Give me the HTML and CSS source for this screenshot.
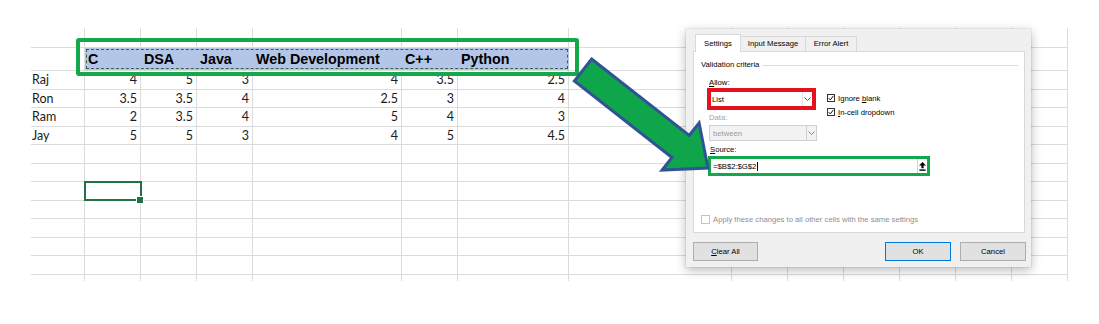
FILE: index.html
```html
<!DOCTYPE html>
<html lang="en">
<head>
<meta charset="utf-8">
<title>Data Validation</title>
<link rel="stylesheet" href="styles.css">
</head>
<body>
<div class="page">
  <div class="sheet">
    <div class="row top"><i></i><i></i><i></i><i></i><i></i><i></i><i></i><i></i><i></i><i></i><i></i><i></i><i></i><i></i></div>
    <div class="row head"><i></i><div class="hdr"><span>C</span><span>DSA</span><span>Java</span><span>Web Development</span><span>C++</span><span>Python</span></div><i></i><i></i><i></i><i></i><i></i><i></i><i></i></div>
    <div class="row data"><span class="nm">Raj</span><span class="v">4</span><span class="v">5</span><span class="v">3</span><span class="v">4</span><span class="v">3.5</span><span class="v">2.5</span><i></i><i></i><i></i><i></i><i></i><i></i><i></i></div>
    <div class="row data"><span class="nm">Ron</span><span class="v">3.5</span><span class="v">3.5</span><span class="v">4</span><span class="v">2.5</span><span class="v">3</span><span class="v">4</span><i></i><i></i><i></i><i></i><i></i><i></i><i></i></div>
    <div class="row data"><span class="nm">Ram</span><span class="v">2</span><span class="v">3.5</span><span class="v">4</span><span class="v">5</span><span class="v">4</span><span class="v">3</span><i></i><i></i><i></i><i></i><i></i><i></i><i></i></div>
    <div class="row data"><span class="nm">Jay</span><span class="v">5</span><span class="v">5</span><span class="v">3</span><span class="v">4</span><span class="v">5</span><span class="v">4.5</span><i></i><i></i><i></i><i></i><i></i><i></i><i></i></div>
    <div class="row"><i></i><i></i><i></i><i></i><i></i><i></i><i></i><i></i><i></i><i></i><i></i><i></i><i></i><i></i></div>
    <div class="row"><i></i><i></i><i></i><i></i><i></i><i></i><i></i><i></i><i></i><i></i><i></i><i></i><i></i><i></i></div>
    <div class="row"><i></i><i class="sel"></i><i></i><i></i><i></i><i></i><i></i><i></i><i></i><i></i><i></i><i></i><i></i><i></i></div>
    <div class="row"><i></i><i></i><i></i><i></i><i></i><i></i><i></i><i></i><i></i><i></i><i></i><i></i><i></i><i></i></div>
    <div class="row"><i></i><i></i><i></i><i></i><i></i><i></i><i></i><i></i><i></i><i></i><i></i><i></i><i></i><i></i></div>
    <div class="row"><i></i><i></i><i></i><i></i><i></i><i></i><i></i><i></i><i></i><i></i><i></i><i></i><i></i><i></i></div>
    <div class="row"><i></i><i></i><i></i><i></i><i></i><i></i><i></i><i></i><i></i><i></i><i></i><i></i><i></i><i></i></div>
    <div class="row tail"><i></i><i></i><i></i><i></i><i></i><i></i><i></i><i></i><i></i><i></i><i></i><i></i><i></i><i></i></div>
  </div>

  <div class="hl-head"></div>

  <div class="dialog">
    <div class="tabs">
      <div class="tab active t1">Settings</div>
      <div class="tab t2">Input Message</div>
      <div class="tab t3">Error Alert</div>
    </div>
    <div class="panel">
      <div class="legend"><span>Validation criteria</span><div class="rule"></div></div>
      <div class="criteria">
        <div class="left">
          <div class="lbl allow"><u>A</u>llow:</div>
          <div class="hl-red">
            <div class="combo"><span class="txt">List</span><span class="dd"><svg width="7" height="4" viewBox="0 0 7 4"><polyline points="0.5,0.5 3.5,3.5 6.5,0.5" fill="none" stroke="#444" stroke-width="0.9"/></svg></span></div>
          </div>
          <div class="lbl data-lbl">Data:</div>
          <div class="combo dis"><span class="txt">between</span><span class="dd"><svg width="7" height="4" viewBox="0 0 7 4"><polyline points="0.5,0.5 3.5,3.5 6.5,0.5" fill="none" stroke="#777" stroke-width="0.9"/></svg></span></div>
        </div>
        <div class="right">
          <div class="chk"><span class="box on"><svg width="6" height="6" viewBox="0 0 6 6"><path d="M0.6 3.1 L2.3 4.9 L5.4 0.9" fill="none" stroke="#111" stroke-width="1"/></svg></span><span>Ignore <u>b</u>lank</span></div>
          <div class="chk"><span class="box on"><svg width="6" height="6" viewBox="0 0 6 6"><path d="M0.6 3.1 L2.3 4.9 L5.4 0.9" fill="none" stroke="#111" stroke-width="1"/></svg></span><span><u>I</u>n-cell dropdown</span></div>
        </div>
      </div>
      <div class="lbl src"><u>S</u>ource:</div>
      <div class="hl-green">
        <div class="input"><span class="txt">=$B$2:$G$2</span><span class="caret"></span><span class="grow"></span><span class="collapse"><svg width="7" height="9" viewBox="0 0 7 9"><path d="M3.5 0 L7 3.6 H4.6 V6.3 H2.4 V3.6 H0 Z" fill="#000"/><rect x="0.4" y="7.4" width="6.2" height="1.4" fill="#000"/></svg></span></div>
      </div>
      <div class="chk apply"><span class="box off"></span><span>Apply these changes to all other cells with the same settings</span></div>
    </div>
    <div class="buttons">
      <button class="btn clear"><u>C</u>lear All</button>
      <span class="grow"></span>
      <button class="btn ok">OK</button>
      <button class="btn">Cancel</button>
    </div>
  </div>

  <svg class="arrow" width="1099" height="324" viewBox="0 0 1099 324">
    <polygon points="591.6,59 689.2,135.5 699.1,122.9 708,168 662.1,170.1 672,157.5 574.4,81" fill="#0fa64b" stroke="#2f5395" stroke-width="3" stroke-linejoin="miter"/>
  </svg>
</div>
</body>
</html>
```

FILE: styles.css
```css
* { box-sizing: border-box; margin: 0; padding: 0; }
html, body { background: #fff; }
body {
  width: 1099px;
  height: 324px;
  overflow: hidden;
  font-family: "Liberation Sans", Arial, sans-serif;
  color: #000;
}
.page {
  position: relative;
  width: 1099px;
  height: 324px;
  padding: 28px 0 0 31px;
}

/* ---------- spreadsheet ---------- */
.sheet {
  width: 1037px;
  font-family: Lato, "Liberation Sans", sans-serif;
  font-size: 12.5px;
  color: #1a1a1a;
}
.row {
  display: grid;
  grid-template-columns: 54px repeat(3, 56px) 149px 56px 111px 163px repeat(6, 56px);
  height: 18.5px;
  border-bottom: 1px solid #dcdcdc;
}
.row > * {
  border-right: 1px solid #dcdcdc;
  font-style: normal;
  white-space: nowrap;
}
.row.top { height: 20px; }
.row.head { height: 23px; }
.row.tail { height: 6px; border-bottom: none; }
.row.data > * { line-height: 17.5px; }
.nm { padding-left: 1px; }
.v { text-align: right; padding-right: 3px; }

.row > .hdr {
  grid-column: span 6;
  display: grid;
  grid-template-columns: repeat(3, 56px) 149px 56px 111px;
  background: #b4c6e7;
  border-right-color: #b4c6e7;
  outline: 1px dashed #35634f;
  outline-offset: -2px;
  font-family: "Liberation Sans", Arial, sans-serif;
  font-weight: bold;
  font-size: 14.3px;
  line-height: 22px;
  color: #000;
}
.hdr span { padding-left: 3px; }

.sel {
  position: relative;
  outline: 2px solid #217346;
  outline-offset: -1px;
  z-index: 1;
}
.sel::after {
  content: "";
  position: absolute;
  right: -4px;
  bottom: -4px;
  width: 6px;
  height: 6px;
  background: #217346;
  border: 1px solid #fff;
}

.hl-head {
  position: absolute;
  left: 76px;
  top: 38px;
  width: 503px;
  height: 38px;
  border: 4px solid #12a84b;
  border-radius: 3px;
  z-index: 1;
}

/* ---------- dialog ---------- */
.dialog {
  position: absolute;
  left: 686px;
  top: 29px;
  width: 345px;
  height: 238px;
  background: #f0f0f0;
  box-shadow: 0 0 0 1px rgba(0, 0, 0, 0.05), 0 3px 10px rgba(0, 0, 0, 0.28);
  padding: 5px 5px 0 7px;
  display: flex;
  flex-direction: column;
  font-size: 7.7px;
  z-index: 2;
}
.tabs {
  display: flex;
  align-items: flex-end;
  height: 17px;
  margin-left: 2px;
}
.tab {
  height: 15px;
  line-height: 14px;
  border: 1px solid #d9d9d9;
  border-bottom: none;
  background: #f0f0f0;
  text-align: center;
  margin-left: -1px;
}
.tab.t1 { width: 46px; }
.tab.t2 { width: 66px; }
.tab.t3 { width: 52px; }
.tab.active {
  height: 18px;
  line-height: 17px;
  background: #fff;
  position: relative;
  z-index: 1;
  margin-bottom: -1px;
  margin-left: 0;
}
.panel {
  width: 332px;
  height: 182px;
  background: #fff;
  border: 1px solid #d9d9d9;
  padding: 8px 6px 8px 7px;
  display: flex;
  flex-direction: column;
}
.legend {
  display: flex;
  align-items: center;
  height: 10px;
  line-height: 10px;
}
.legend .rule {
  flex: 1;
  height: 1px;
  background: #dcdcdc;
  margin-left: 3px;
}
.criteria { display: flex; margin-top: 8px; }
.left { width: 126px; }
.lbl { height: 10px; line-height: 10px; white-space: nowrap; }
.allow { margin-left: 8px; }
.hl-red {
  margin-left: 6px;
  width: 109px;
  height: 22px;
  border: 4px solid #e5121c;
}
.combo {
  display: flex;
  align-items: center;
  height: 14px;
  background: #fff;
}
.combo .txt { flex: 1; padding-left: 1px; }
.dd {
  width: 10px;
  height: 100%;
  border-left: 1px solid #e2e2e2;
  display: flex;
  align-items: center;
  justify-content: center;
}
.data-lbl { margin: 3px 0 0 8px; color: #a3a3a3; }
.combo.dis {
  margin: 2px 0 0 8px;
  width: 108px;
  height: 16px;
  border: 1px solid #cfcfcf;
  background: #f2f2f2;
  color: #9b9b9b;
}
.combo.dis .txt { padding-left: 3px; }
.combo.dis .dd { border-left-color: #cfcfcf; }
.right { padding-top: 13px; }
.chk {
  display: flex;
  align-items: center;
  height: 14px;
  white-space: nowrap;
}
.box {
  width: 8px;
  height: 8px;
  border: 1px solid #333;
  background: #fff;
  margin-right: 3px;
  display: flex;
  align-items: center;
  justify-content: center;
  flex: none;
}
.src { margin: 4px 0 0 9px; }
.hl-green {
  margin: 1px 0 0 7px;
  width: 222px;
  height: 20px;
  border: 3px solid #12a84b;
}
.input {
  display: flex;
  align-items: center;
  height: 14px;
  background: #fff;
}
.input .txt { padding-left: 2px; }
.caret {
  width: 1px;
  height: 9px;
  background: #000;
  margin-left: 1px;
}
.grow { flex: 1; }
.collapse {
  width: 10px;
  height: 100%;
  border-left: 1px solid #d0d0d0;
  display: flex;
  align-items: center;
  justify-content: center;
}
.apply {
  margin-top: auto;
  height: 10px;
  color: #8f8f8f;
}
.box.off {
  width: 9px;
  height: 9px;
  border-color: #c4c4c4;
}
.buttons {
  display: flex;
  margin-top: 9px;
  height: 19px;
  gap: 9px;
}
.btn {
  width: 66px;
  height: 19px;
  border: 1px solid #adadad;
  background: #e1e1e1;
  font: inherit;
  color: #000;
}
.btn.clear { width: 65px; }
.btn.ok { border-color: #0078d7; }

.arrow {
  position: absolute;
  left: 0;
  top: 0;
  z-index: 3;
  pointer-events: none;
}
```
